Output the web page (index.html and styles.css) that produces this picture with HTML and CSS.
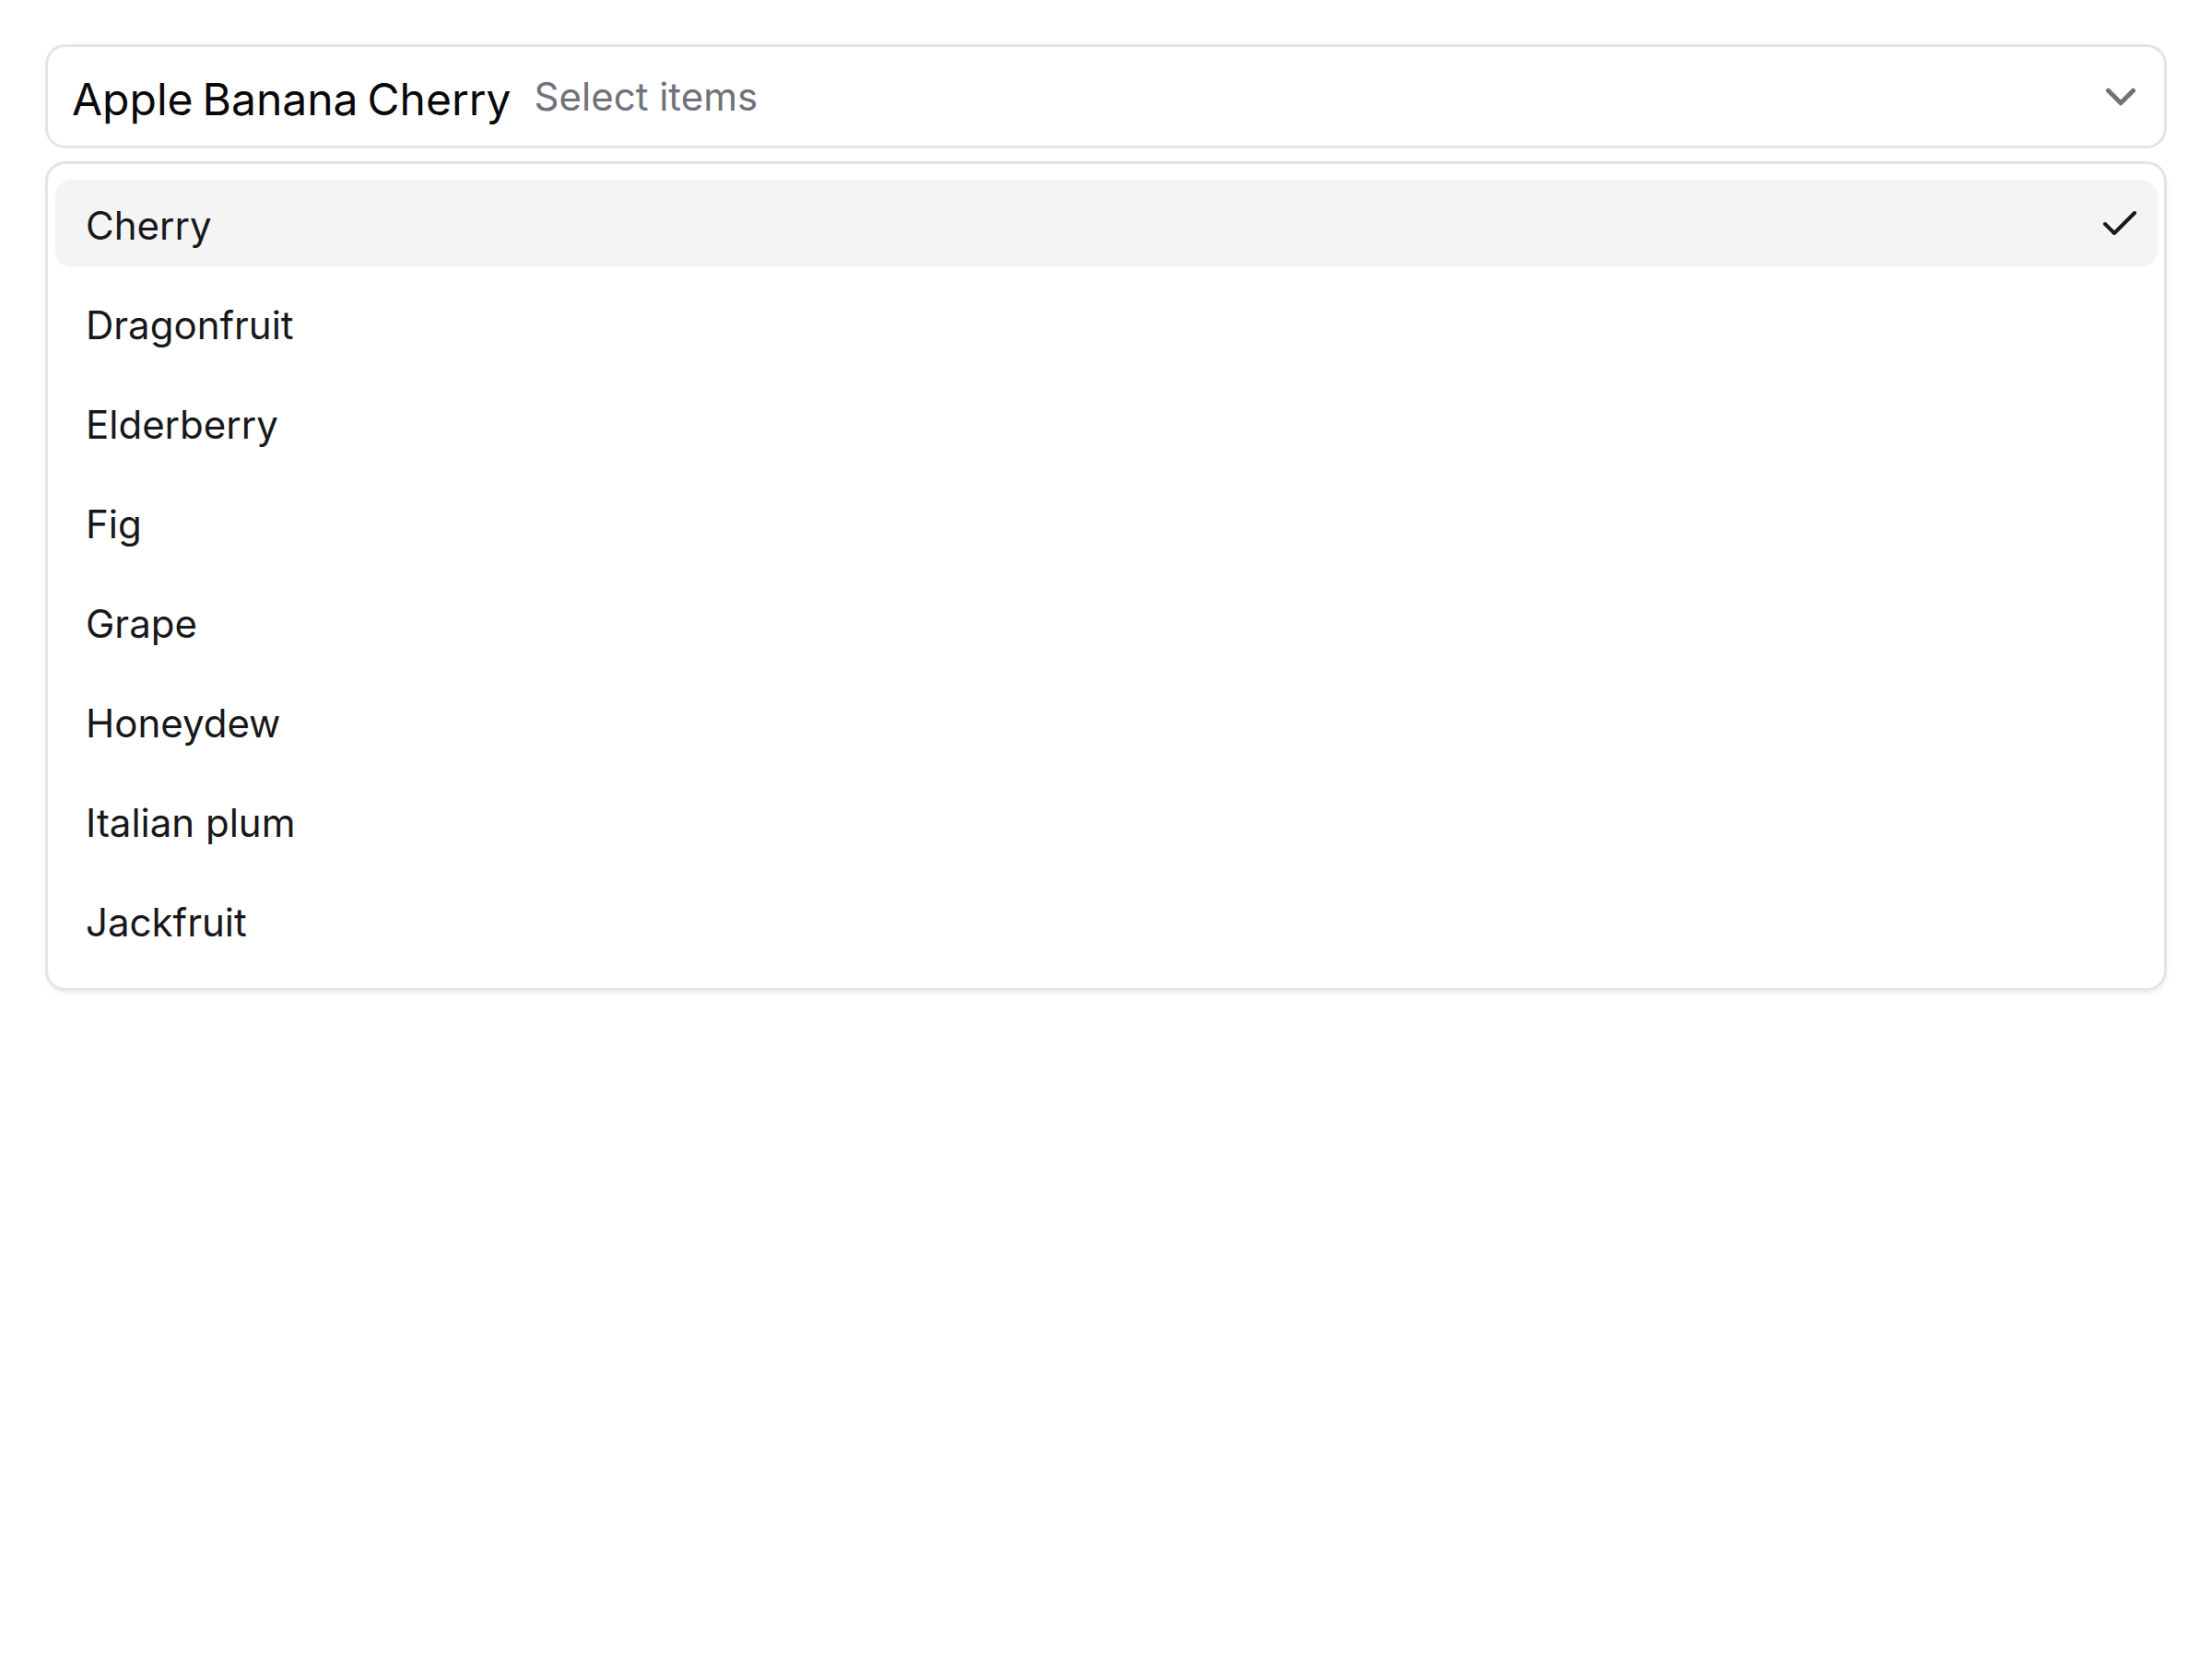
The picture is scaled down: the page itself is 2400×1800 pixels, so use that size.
FILE: index.html
```html
<!DOCTYPE html>
<html lang="en">
<head>
<meta charset="utf-8">
<title>Multi select</title>
<link rel="stylesheet" href="styles.css">
</head>
<body>
<div class="page">
  <div class="trigger">
    <div class="values">
      <span class="value">Apple</span>
      <span class="value">Banana</span>
      <span class="value">Cherry</span>
    </div>
    <span class="placeholder">Select items</span>
    <svg class="chevron" viewBox="0 0 24 24" fill="none" stroke="currentColor" stroke-width="2.2" stroke-linecap="round" stroke-linejoin="round"><path d="m6 9 6 6 6-6"/></svg>
  </div>
  <ul class="list">
    <li class="item active"><span class="label">Cherry</span><svg class="check" viewBox="0 0 24 24" fill="none" stroke="currentColor" stroke-width="2" stroke-linecap="round" stroke-linejoin="round"><path d="M20 6 9 17l-5-5"/></svg></li>
    <li class="item"><span class="label">Dragonfruit</span></li>
    <li class="item"><span class="label">Elderberry</span></li>
    <li class="item"><span class="label">Fig</span></li>
    <li class="item"><span class="label">Grape</span></li>
    <li class="item"><span class="label">Honeydew</span></li>
    <li class="item"><span class="label">Italian plum</span></li>
    <li class="item"><span class="label">Jackfruit</span></li>
  </ul>
</div>
</body>
</html>
```
FILE: styles.css
```css
* { box-sizing: border-box; }
html, body { margin: 0; padding: 0; background: #ffffff; }
body { font-family: Inter, "Noto Sans", sans-serif; color: #18181b; }

.page {
  padding: 48px 49px;
}

.trigger {
  display: flex;
  align-items: center;
  height: 113px;
  border: 3px solid #e4e4e7;
  border-radius: 22px;
  padding: 0 20px 0 26px;
  background: #ffffff;
}

.values {
  display: flex;
  gap: 10px;
  font-size: 48px;
  line-height: 58px;
  color: #09090b;
  padding-top: 7px;
}

.placeholder {
  margin-left: 25px;
  font-size: 42px;
  line-height: 51px;
  color: #71717a;
  flex: 1;
}

.chevron {
  width: 54px;
  height: 54px;
  color: #71717a;
  flex: none;
}

.list {
  list-style: none;
  margin: 14px 0 0 0;
  padding: 17px 7px 26px 8px;
  border: 3px solid #e4e4e7;
  border-radius: 22px;
  box-shadow: 0 4px 6px -1px rgba(0, 0, 0, 0.06), 0 2px 4px -2px rgba(0, 0, 0, 0.05);
  display: flex;
  flex-direction: column;
  gap: 13px;
}

.item {
  display: flex;
  align-items: center;
  justify-content: space-between;
  height: 95px;
  padding: 0 17px 0 33px;
  border-radius: 18px;
  font-size: 42px;
  line-height: 51px;
  color: #18181b;
}

.item .label { padding-top: 4px; }

.item.active { background: #f4f4f5; }

.check {
  width: 48px;
  height: 48px;
  color: #18181b;
  flex: none;
}
```
